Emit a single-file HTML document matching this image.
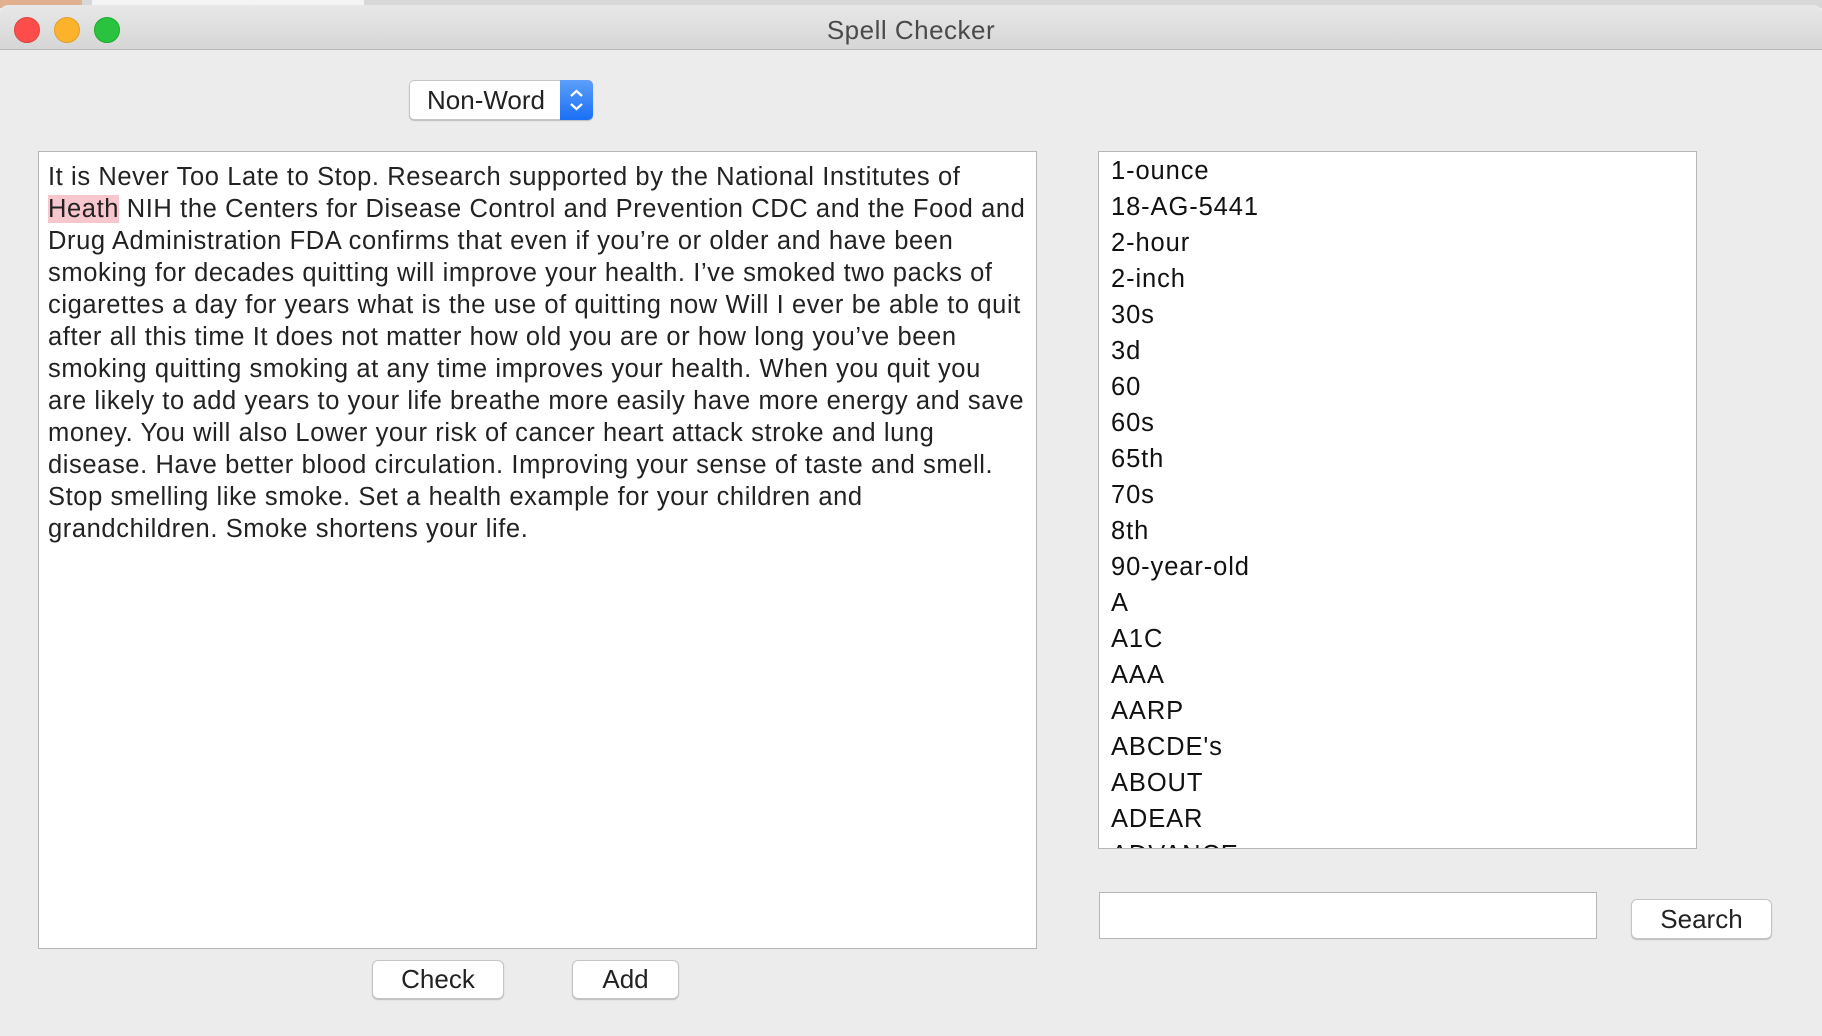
<!DOCTYPE html>
<html><head><meta charset="utf-8"><style>
body{margin:0;width:1822px;height:1036px;background:#ececec;font-family:"Liberation Sans",Helvetica,sans-serif;position:relative;overflow:hidden;color:#222}
.top{position:absolute;left:0;top:0;width:1822px;height:8px;background:#d8d8d8}
.tb{position:absolute;left:0;top:5px;width:1822px;height:44px;background:linear-gradient(#e8e8e8,#d6d6d6);border-bottom:1px solid #b8b8b8;border-radius:8px 8px 0 0}
.l{position:absolute;top:17px;width:24px;height:24px;border-radius:50%}
.title{position:absolute;left:0;width:1822px;top:15px;text-align:center;font-size:26px;color:#4a4a4a;letter-spacing:0.5px}
.box{position:absolute;background:#fff;border:1px solid #b5b5b5;box-sizing:border-box}
.ta{left:38px;top:151px;width:999px;height:798px;padding:9px 0 0 9px;font-size:25.5px;line-height:32px;white-space:nowrap;color:#222;letter-spacing:0.6px}
.hl{background:#f8c6cd}
.list{left:1098px;top:151px;width:599px;height:698px;overflow:hidden;padding:1px 0 0 12px;font-size:25.5px;line-height:36px;color:#111;letter-spacing:0.9px}
.btn{position:absolute;background:#fff;border:1px solid #c4c4c4;border-radius:6px;box-shadow:0 1px 1px rgba(0,0,0,.2);text-align:center;font-size:26px;box-sizing:border-box;color:#222}
</style></head><body>
<div class="top"><div style="position:absolute;left:0;top:0;width:82px;height:8px;background:#e0b090"></div><div style="position:absolute;left:92px;top:0;width:272px;height:8px;background:#f4f4f4"></div></div>
<div class="tb"></div>
<div class="l" style="left:14px;background:#fd4d4a;border:1px solid #e0443e"></div>
<div class="l" style="left:54px;background:#fdb22c;border:1px solid #dea034"></div>
<div class="l" style="left:94px;background:#2ac33f;border:1px solid #1aab29"></div>
<div class="title">Spell Checker</div>
<div class="btn" style="left:409px;top:80px;width:184px;height:40px;line-height:38px;text-align:left;padding-left:17px;border-radius:5px">Non-Word
<div style="position:absolute;right:-1px;top:-1px;width:33px;height:40px;background:linear-gradient(#5d9ff9,#1a6ff5);border-radius:0 5px 5px 0"><svg width="33" height="40"><path d="M11 16l5.5-5 5.5 5M11 24l5.5 5 5.5-5" stroke="#fff" stroke-width="2.2" fill="none"/></svg></div></div>
<div class="box ta">It is Never Too Late to Stop. Research supported by the National Institutes of<br><span class="hl">Heath</span> NIH the Centers for Disease Control and Prevention CDC and the Food and<br>Drug Administration FDA confirms that even if you’re or older and have been<br>smoking for decades quitting will improve your health. I’ve smoked two packs of<br>cigarettes a day for years what is the use of quitting now Will I ever be able to quit<br>after all this time It does not matter how old you are or how long you’ve been<br>smoking quitting smoking at any time improves your health. When you quit you<br>are likely to add years to your life breathe more easily have more energy and save<br>money. You will also Lower your risk of cancer heart attack stroke and lung<br>disease. Have better blood circulation. Improving your sense of taste and smell.<br>Stop smelling like smoke. Set a health example for your children and<br>grandchildren. Smoke shortens your life.</div>
<div class="box list">1-ounce<br>18-AG-5441<br>2-hour<br>2-inch<br>30s<br>3d<br>60<br>60s<br>65th<br>70s<br>8th<br>90-year-old<br>A<br>A1C<br>AAA<br>AARP<br>ABCDE's<br>ABOUT<br>ADEAR<br>ADVANCE</div>
<div class="box" style="left:1099px;top:892px;width:498px;height:47px"></div>
<div class="btn" style="left:1631px;top:899px;width:141px;height:40px;line-height:38px">Search</div>
<div class="btn" style="left:372px;top:960px;width:132px;height:39px;line-height:37px">Check</div>
<div class="btn" style="left:572px;top:960px;width:107px;height:39px;line-height:37px">Add</div>
</body></html>
